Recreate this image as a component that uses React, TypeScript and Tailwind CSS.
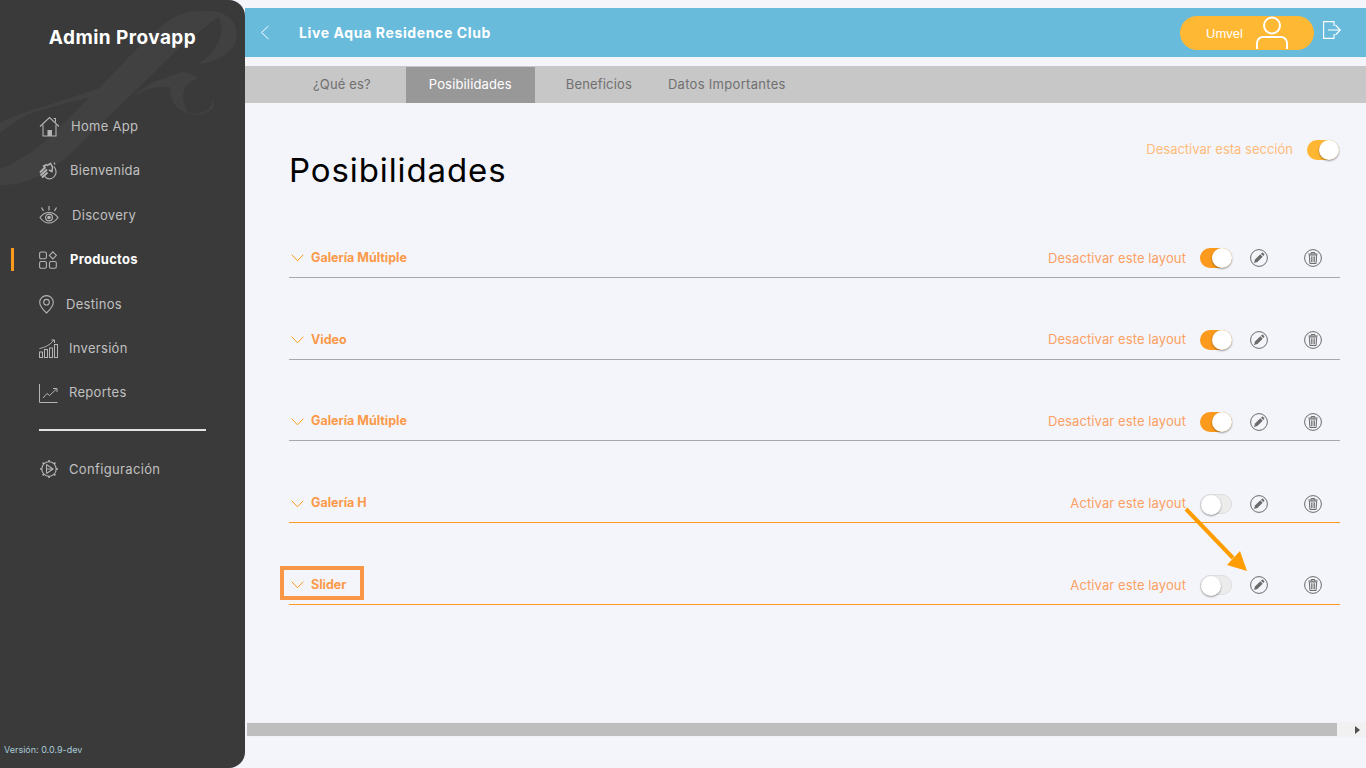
import React from 'react'

const G = '#b4b4b4'

function HomeIcon() {
  return (
    <svg width="21" height="21" viewBox="0 0 21 21" fill="none" stroke={G} strokeWidth="1.1">
      <path d="M1 10.5 10.5 1.5 20 10.5" />
      <path d="M4 8.5V20H17V8.5" />
      <path d="M14.5 2.5h2v3.5" />
      <rect x="8.5" y="14" width="4.5" height="6" fill={G} stroke="none" />
    </svg>
  )
}

function HandsIcon() {
  return (
    <svg width="18" height="18" viewBox="0 0 18 18" fill="none" stroke={G} strokeWidth="1.1">
      <path d="M15 4.500C17 7 17.500 10 16.500 12.500 15 16.500 10.500 18 7.500 16 6.500 15.400 6 14.500 5.500 13.500" />
      <path d="M1 10.500 6.500 5M1.500 13.500 8 7.500M3 15.500 8.500 10.500M4 4.500 8 2.500" strokeWidth="1.900" />
      <path d="M8 3.500 11.500 1.500 13.500 5 13 9.500 10 8" strokeWidth="1.500" />
      <path d="M15 .5 16 2.500" />
    </svg>
  )
}

function EyeIcon() {
  return (
    <svg width="20" height="18" viewBox="0 0 20 18" fill="none" stroke={G} strokeWidth="1.2">
      <path d="M1 11.500c2.500-3.500 5.500-5 9-5s6.500 1.500 9 5c-2.500 3.500-5.500 5.500-9 5.500s-6.500-2-9-5.500Z" />
      <circle cx="10" cy="11.500" r="3.400" />
      <circle cx="10" cy="11.500" r="1.200" fill={G} />
      <path d="M10 0v4.500M2.500 1.500 4.500 5M17.500 1.500 15.500 5" />
    </svg>
  )
}

function ProductsIcon() {
  return (
    <svg width="18" height="18" viewBox="0 0 18 18" fill="none" stroke={G} strokeWidth="1.1">
      <rect x="0.600" y="1" width="6.800" height="6.800" rx="1.500" />
      <rect x="0.600" y="10.500" width="6.800" height="6.800" rx="1.500" />
      <rect x="10.500" y="10.500" width="6.800" height="6.800" rx="1.500" />
      <path d="M13.900.9 17.400 4.400 13.900 7.900 10.400 4.400Z" />
    </svg>
  )
}

function PinIcon() {
  return (
    <svg width="15" height="19" viewBox="0 0 15 19" fill="none" stroke={G} strokeWidth="1.100">
      <path d="M7.500 18C3.500 14 .7 11 .7 7.400a6.800 6.800 0 0 1 13.600 0C14.300 11 11.500 14 7.500 18Z" />
      <circle cx="7.500" cy="7.200" r="2.800" />
    </svg>
  )
}

function InvestIcon() {
  return (
    <svg width="19" height="19" viewBox="0 0 19 19" fill="none" stroke={G} strokeWidth="1">
      <rect x="0.500" y="13" width="3" height="5.500" />
      <rect x="5.500" y="10.500" width="3" height="8" />
      <rect x="10.500" y="9" width="3" height="9.500" />
      <rect x="15.500" y="5.500" width="3" height="13" />
      <path d="M.5 9.500C6 8.500 11 6 15 1M12.500 1H15.500V4" />
    </svg>
  )
}

function ReportIcon() {
  return (
    <svg width="19" height="19" viewBox="0 0 19 19" fill="none" stroke={G} strokeWidth="1">
      <path d="M.5 0V18.500H18.500" />
      <path d="M4 14 8 9.500 10.500 11.500 17.500 5M14 4.500H18V8" />
    </svg>
  )
}

function GearIcon() {
  return (
    <svg width="18" height="18" viewBox="0 0 18 18" fill="none" stroke={G} strokeWidth="1.100">
      <circle cx="9" cy="9" r="7.200" />
      <path d="M6.500 4.500 13 9 6.500 13.500M6.500 9H13M6.500 4.500V13.500" />
      <path d="M9 0v2M9 16v2M0 9h2M16 9h2M2.600 2.600 4 4M14 14l1.400 1.400M15.400 2.600 14 4M4 14l-1.400 1.400" strokeWidth="1.600" />
    </svg>
  )
}

function PencilIcon() {
  return (
    <svg width="18" height="18" viewBox="0 0 18 18" fill="none">
      <circle cx="9" cy="9" r="8.400" stroke="#6b6b6b" strokeWidth="1" />
      <path d="M4 14 5 10.600 10.300 5.300 12.700 7.700 7.400 13Z" fill="#6b6b6b" />
      <path d="M11 4.700 11.900 3.800a.8.8 0 0 1 1.100 0l1.200 1.200a.8.8 0 0 1 0 1.100L13.300 7Z" fill="#6b6b6b" />
    </svg>
  )
}

function TrashIcon() {
  return (
    <svg width="18" height="18" viewBox="0 0 18 18" fill="none">
      <circle cx="9" cy="9" r="8.400" stroke="#6b6b6b" strokeWidth="1" />
      <path d="M4.300 5H13.700M7.200 4.800V3.500H10.800V4.800" stroke="#6b6b6b" strokeWidth="1" />
      <path d="M5.300 6 5.900 14.500H12.100L12.700 6Z" stroke="#6b6b6b" strokeWidth="1" />
      <path d="M7.400 7.300V13.300M9 7.300V13.300M10.600 7.300V13.300" stroke="#6b6b6b" strokeWidth="0.900" />
    </svg>
  )
}

function Toggle({ on, color = '#fb9a1c' }: { on: boolean; color?: string }) {
  return (
    <div
      className={`relative h-5 w-8 rounded-full shrink-0 ${on ? '' : 'bg-[#ececec] border border-[#dedede]'}`}
      style={on ? { backgroundColor: color } : undefined}
    >
      <div
        className={`absolute top-0 h-5 w-5 rounded-full bg-white shadow-[0_1px_2px_rgba(0,0,0,0.4)] ${on ? 'right-0' : 'left-0'}`}
      />
    </div>
  )
}

const navItems = [
  { label: 'Home App', icon: <HomeIcon />, textLeft: 'ml-[11px]' },
  { label: 'Bienvenida', icon: <HandsIcon />, textLeft: 'ml-[10px]' },
  { label: 'Discovery', icon: <EyeIcon />, textLeft: 'ml-[12px]' },
  { label: 'Productos', icon: <ProductsIcon />, textLeft: 'ml-[10px]', active: true },
  { label: 'Destinos', icon: <PinIcon />, textLeft: 'ml-[6px]' },
  { label: 'Inversión', icon: <InvestIcon />, textLeft: 'ml-[9px]' },
  { label: 'Reportes', icon: <ReportIcon />, textLeft: 'ml-[9px]' },
]

const rows = [
  { title: 'Galería Múltiple', on: true },
  { title: 'Video', on: true },
  { title: 'Galería Múltiple', on: true },
  { title: 'Galería H', on: false },
  { title: 'Slider', on: false },
]

function Sidebar() {
  return (
    <aside className="relative z-10 flex h-full w-[245px] shrink-0 flex-col overflow-hidden rounded-r-[16px] bg-[#3a3a3a]">
      {/* watermark */}
      <svg className="absolute left-0 top-0" width="245" height="200" viewBox="0 0 245 200" fill="#414141">
        <path d="M0 168C6 167 10 165 13 163 27 155 38 148 50 137L100 87C115 72 128 57 143 43 153 33 165 22 180 14 195 10 215 10 222 13 232 18 237 26 237 35 237 42 233 48 227 53 219 60 209 63 198 64 206 60 213 52 218 43 222 35 223 24 218 17L180 47 133 93 67 157C50 170 35 180 20 183 13 185 6 185 0 185Z" />
        <path d="M0 123C11 117 22 113 33 110L100 88 100 95C88 98 78 100 67 103 52 107 40 110 27 115 17 120 8 127 0 133Z" />
        <path d="M133 95 153 82 182 72C188 73 194 75 198 78 193 80 189 82 187 85 184 89 183 93 183 98 184 104 185 109 188 112 192 114 196 114 200 113 205 112 209 110 210 107 212 104 213 101 213 98 214 102 214 105 213 108 210 111 207 113 203 114 197 116 192 115 187 113 180 110 176 107 173 102 171 97 170 92 170 87 164 87 158 87 153 88Z" />
      </svg>

      <h1 className="relative mt-[26px] text-center text-[19px] font-bold leading-[24px] tracking-[0.45px] text-white">Admin Provapp</h1>

      <nav className="relative mt-[54.5px]">
        {navItems.map(item => (
          <div key={item.label} className="relative flex h-[44.4px] items-center pl-[39px]">
            {item.active && <div className="absolute left-[11px] top-[10px] h-[23px] w-[3px] bg-[#fb9a1c]" />}
            <div className="flex w-[21px] justify-start">{item.icon}</div>
            <span className={`${item.textLeft} text-[13px] tracking-[0.3px] ${item.active ? 'font-bold text-white' : 'text-[#c0c0c0]'}`}>
              {item.label}
            </span>
          </div>
        ))}
      </nav>

      <div className="relative ml-[39px] mt-[13.500px] h-[2px] w-[167px] bg-[#e2e2e2]" />

      <div className="relative mt-[29px] flex items-center pl-[40px]">
        <GearIcon />
        <span className="ml-[11px] text-[13px] tracking-[0.35px] text-[#c0c0c0]">Configuración</span>
      </div>

      <p className="relative mt-auto mb-[12px] ml-[4px] text-[9px] text-[#a9cbd8]">Versión: 0.0.9-dev</p>
    </aside>
  )
}

function Header() {
  return (
    <header className="mt-2 flex h-[49px] items-center bg-[#69bbdb] pl-[15px] pr-[25px]">
      <svg width="10" height="15" viewBox="0 0 10 15" fill="none" stroke="#ffffff" strokeWidth="1">
        <path d="M8.500 1 1.500 7.500 8.500 14" />
      </svg>
      <span className="ml-[29px] text-[14px] font-bold tracking-[0.62px] text-white">Live Aqua Residence Club</span>
      <div className="ml-auto flex h-[34px] w-[134px] items-center rounded-full bg-[#ffb833] pl-[26px]">
        <span className="mt-[2px] font-['Liberation_Sans',sans-serif] text-[13px] text-white">Umvel</span>
        <svg className="ml-[13px]" width="32" height="33" viewBox="0 0 32 33" fill="none" stroke="#ffffff" strokeWidth="2">
          <circle cx="16" cy="9.500" r="8" />
          <path d="M1 33V27a6 6 0 0 1 6-6H25a6 6 0 0 1 6 6V33" />
        </svg>
      </div>
      <svg className="ml-[9px] mb-[5px]" width="18" height="18" viewBox="0 0 18 18" fill="none" stroke="#ffffff" strokeWidth="1.100">
        <path d="M11 5V.6H.6V17.400H11V13" />
        <path d="M5 9H17M12.500 4 17.300 9 12.500 14" />
      </svg>
    </header>
  )
}

function Tabs() {
  return (
    <div className="mt-[9px] flex h-[37px] items-end bg-[#c7c7c7] pl-[68px] text-[13px] tracking-[0.15px] text-[#707070]">
      <span className="mb-[9px]">¿Qué es?</span>
      <div className="ml-[35px] flex h-[36px] items-center bg-[#989898] px-[23px] text-white">Posibilidades</div>
      <span className="ml-[31px] mb-[9px]">Beneficios</span>
      <span className="ml-[36px] mb-[9px] tracking-[0.3px]">Datos Importantes</span>
    </div>
  )
}

function LayoutRow({ title, on }: { title: string; on: boolean }) {
  return (
    <div className="flex h-[81.75px] flex-col justify-end">
      <div className={`flex h-[38px] items-center border-b ${on ? 'border-[#a8a8a8]' : 'border-[#fb9a1c]'}`}>
        <svg className="ml-[2px]" width="13" height="8" viewBox="0 0 13 8" fill="none" stroke="#fb9a1c" strokeWidth="1">
          <path d="M.7.7 6.500 6.800 12.300.7" />
        </svg>
        <span className="ml-[7px] text-[12.5px] font-bold text-[#fb9a4a]">{title}</span>
        <span className="ml-auto text-[13px] tracking-[0.1px] text-[#fca064]">{on ? 'Desactivar este layout' : 'Activar este layout'}</span>
        <div className="ml-[14px]"><Toggle on={on} /></div>
        <div className="ml-[18px]"><PencilIcon /></div>
        <div className="ml-[36px] mr-[18px]"><TrashIcon /></div>
      </div>
    </div>
  )
}

export default function App() {
  return (
    <div className="relative flex h-screen w-full overflow-hidden bg-[#f4f5fa] font-['Inter',sans-serif]">
      <Sidebar />
      <main className="flex min-w-0 flex-1 flex-col">
        <Header />
        <Tabs />
        <section className="pl-[44px] pr-[26px]">
          <div className="flex h-[93px] items-start justify-between pt-[37px]">
            <h2 className="mt-[10px] text-[33px] leading-[40px] tracking-[0.9px] text-black">Posibilidades</h2>
            <div className="mr-px flex items-center">
              <span className="text-[13px] text-[#ffbb7a]">Desactivar esta sección</span>
              <div className="ml-[14px]"><Toggle on color="#ffb733" /></div>
            </div>
          </div>
          {rows.map((row, i) => (
            <LayoutRow key={i} title={row.title} on={row.on} />
          ))}
        </section>
        <div className="mb-[31px] ml-[2px] mt-auto flex h-[15px] items-center bg-[#f1f1f1]">
          <div className="h-[13px] w-[1090px] bg-[#bebebe]" />
          <svg className="ml-auto mr-[6px]" width="5" height="8" viewBox="0 0 5 8" fill="#505050">
            <path d="M0 0 5 4 0 8Z" />
          </svg>
        </div>
      </main>

      {/* annotations */}
      <div className="absolute left-[280px] top-[566px] h-[34px] w-[84px] border-[4px] border-[#f99746]" />
      <svg className="absolute left-[1180px] top-[505px]" width="72" height="70" viewBox="0 0 72 70" fill="none">
        <path d="M6 4 53 53" stroke="#ff9d00" strokeWidth="4" />
        <path d="M67 66 47 60 60 46Z" fill="#ff9d00" />
      </svg>
    </div>
  )
}
